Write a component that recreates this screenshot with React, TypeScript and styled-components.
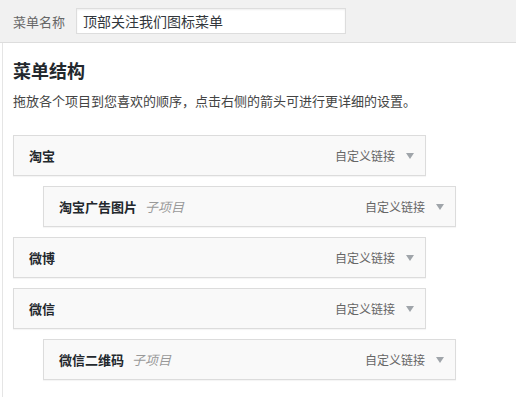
import React from 'react';
import styled, { createGlobalStyle } from 'styled-components';

const GlobalStyle = createGlobalStyle`
  html, body {
    margin: 0;
    padding: 0;
    background: #ffffff;
  }
  body {
    font-family: "Noto Sans CJK SC", "Noto Sans", "Liberation Sans", sans-serif;
    font-size: 13px;
    color: #444;
  }
`;

interface MenuItem {
    title: string;
    depth: number;
    type: string;
}

const items: MenuItem[] = [
    { title: '淘宝', depth: 0, type: '自定义链接' },
    { title: '淘宝广告图片', depth: 1, type: '自定义链接' },
    { title: '微博', depth: 0, type: '自定义链接' },
    { title: '微信', depth: 0, type: '自定义链接' },
    { title: '微信二维码', depth: 1, type: '自定义链接' },
];

const Page = styled.div`
    width: 516px;
    height: 397px;
    overflow: hidden;
`;

const Header = styled.div`
    display: flex;
    align-items: center;
    height: 42px;
    padding: 0 13px;
    background: #f1f1f1;
    border-bottom: 1px solid #dddddd;
    box-sizing: content-box;
`;

const Label = styled.label`
    color: #666;
    font-size: 13px;
    margin-right: 11px;
`;

const NameInput = styled.input`
    width: 270px;
    height: 26px;
    box-sizing: border-box;
    padding: 0 6px;
    border: 1px solid #dddddd;
    box-shadow: inset 0 1px 2px rgba(0, 0, 0, 0.07);
    background: #fff;
    font-family: inherit;
    font-size: 14px;
    color: #32373c;
    outline: none;
`;

const Body = styled.div`
    margin-left: 2px;
    border-left: 1px solid #e5e5e5;
    padding: 12px 0 0 10px;
    height: 360px;
`;

const Title = styled.h3`
    margin: 0;
    font-size: 18px;
    font-weight: 700;
    color: #23282d;
    line-height: 30px;
`;

const Intro = styled.p`
    margin: 1px 0 0;
    font-size: 13px;
    color: #444;
    line-height: 30px;
`;

const List = styled.ul`
    list-style: none;
    margin: 19px 0 0;
    padding: 0;
    display: flex;
    flex-direction: column;
    gap: 10px;
`;

const Row = styled.li<{ $depth: number }>`
    margin-left: ${props => props.$depth * 30}px;
    width: 413px;
    height: 41px;
    box-sizing: border-box;
    display: flex;
    align-items: center;
    padding: 0 11px 0 15px;
    border: 1px solid #dcdcdc;
    background: #f9f9f9;
    box-shadow: 0 1px 1px rgba(0, 0, 0, 0.04);
`;

const ItemTitle = styled.span`
    font-weight: 700;
    font-size: 13px;
    color: #23282d;
`;

const SubLabel = styled.span`
    margin-left: 8px;
    font-style: italic;
    font-size: 13px;
    color: #999;
`;

const ItemType = styled.span`
    margin-left: auto;
    font-size: 12px;
    color: #666;
`;

const Arrow = styled.span`
    margin-left: 11px;
    width: 0;
    height: 0;
    border-left: 4px solid transparent;
    border-right: 4px solid transparent;
    border-top: 6px solid #a0a5aa;
`;

const App: React.FC = () => {
    return (
        <Page>
            <GlobalStyle />
            <Header>
                <Label>菜单名称</Label>
                <NameInput defaultValue="顶部关注我们图标菜单" />
            </Header>
            <Body>
                <Title>菜单结构</Title>
                <Intro>拖放各个项目到您喜欢的顺序，点击右侧的箭头可进行更详细的设置。</Intro>
                <List>
                    {items.map((item, i) => (
                        <Row key={i} $depth={item.depth}>
                            <ItemTitle>{item.title}</ItemTitle>
                            {item.depth > 0 && <SubLabel>子项目</SubLabel>}
                            <ItemType>{item.type}</ItemType>
                            <Arrow />
                        </Row>
                    ))}
                </List>
            </Body>
        </Page>
    );
};

export default App;
